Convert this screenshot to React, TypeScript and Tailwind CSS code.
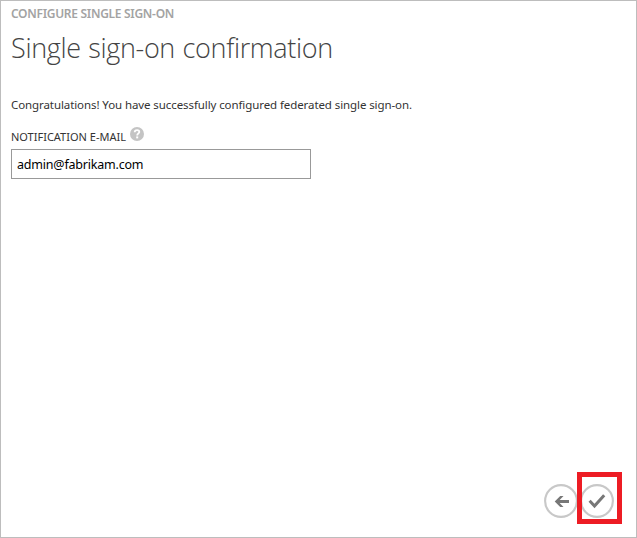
function HelpIcon() {
  return (
    <svg width="14" height="14" viewBox="0 0 14 14" className="mt-px block shrink-0">
      <circle cx="7" cy="7" r="7" fill="#c4c4c4" />
      <path d="M4.7 5.3C4.7 3.8 5.7 3.1 7.1 3.1C8.5 3.1 9.3 3.8 9.3 4.9C9.3 6.3 7.2 6.5 7.2 8.5" fill="none" stroke="#fff" strokeWidth="1.8" />
      <rect x="6.2" y="9.4" width="2" height="2" fill="#fff" />
    </svg>
  );
}

function BackIcon() {
  return (
    <svg width="34" height="34" viewBox="0 0 34 34" className="block">
      <circle cx="17" cy="17" r="15.9" fill="#fff" stroke="#c8c8c8" strokeWidth="2.1" />
      <path d="M25 17.5H13" fill="none" stroke="#777" strokeWidth="3" />
      <path d="M10.7 17.5L16.2 12H19.5L14.2 17.5L19.5 23H16.2Z" fill="#777" />
    </svg>
  );
}

function CheckIcon() {
  return (
    <svg width="34" height="34" viewBox="0 0 34 34" className="block">
      <circle cx="17" cy="17" r="15.9" fill="#fff" stroke="#c8c8c8" strokeWidth="2.1" />
      <path d="M9.6 16.8L14.5 22L24.2 11.2" fill="none" stroke="#777" strokeWidth="3" />
    </svg>
  );
}

export default function App() {
  return (
    <main className="flex h-[538px] w-[637px] flex-col border border-[#bdbdbd] bg-white pl-[10px] font-['Noto_Sans',sans-serif] text-[#333]">
      <div className="mt-[5px] h-4 whitespace-nowrap text-[12px] leading-4 font-semibold tracking-[-0.3px] text-[#a3a3a3]">
        CONFIGURE SINGLE SIGN-ON
      </div>
      <h1 className="mt-[6px] h-10 whitespace-nowrap font-['Open_Sans',sans-serif] text-[27px] leading-10 font-light tracking-[-0.35px] [word-spacing:1px] text-[#444]">
        Single sign-on confirmation
      </h1>
      <p className="mt-[29px] h-4 whitespace-nowrap text-[11.5px] leading-4 tracking-[-0.09px]">
        Congratulations! You have successfully configured federated single sign-on.
      </p>
      <div className="mt-[13px] flex h-[23px] gap-1">
        <label htmlFor="mail" className="mt-[3px] h-4 whitespace-nowrap text-[11px] leading-4">
          NOTIFICATION E-MAIL
        </label>
        <HelpIcon />
      </div>
      <input
        id="mail"
        defaultValue="admin@fabrikam.com"
        className="h-[30px] w-[300px] border border-[#999] px-[5px] text-[12.5px] tracking-[-0.2px] text-black outline-none"
      />
      <footer className="mt-auto mb-[19px] flex items-center gap-[2px] self-end pr-[22px]">
        <button aria-label="Back"><BackIcon /></button>
        <button aria-label="Complete" className="relative">
          <CheckIcon />
          <span className="absolute -top-[12px] -left-[3px] h-[52px] w-[45px] border-[5px] border-[#ed1c24]" />
        </button>
      </footer>
    </main>
  );
}
